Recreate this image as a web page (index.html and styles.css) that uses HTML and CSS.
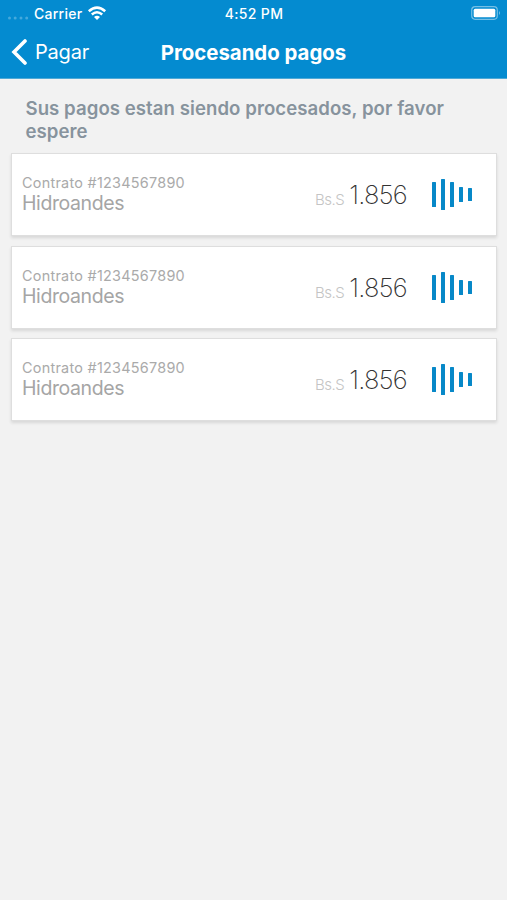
FILE: index.html
```html
<!DOCTYPE html>
<html lang="es">
<head>
<meta charset="utf-8">
<title>Procesando pagos</title>
<link rel="stylesheet" href="styles.css">
</head>
<body>
<header class="header">
  <div class="status">
    <div class="carrier">
      <svg class="signal" width="22" height="4" viewBox="0 0 22 4"><circle cx="2.5" cy="2" r="1.5"/><circle cx="8.2" cy="2" r="1.5"/><circle cx="14" cy="2" r="1.5"/><circle cx="19.7" cy="2" r="1.5"/></svg>
      <span class="carrier-name">Carrier</span>
      <svg class="wifi" width="20" height="15" viewBox="0 0 20 15"><path d="M1.8 5.3Q10-2 18.2 5.3M4.8 8.5Q10 4 15.2 8.5" fill="none" stroke="#fff" stroke-width="2.5"/><path d="M7 10.9Q10 8.5 13 10.9L10 14z" fill="#fff"/></svg>
    </div>
    <span class="time">4:52 PM</span>
    <svg class="battery" width="31" height="14" viewBox="0 0 31 14"><rect x=".7" y=".7" width="25.6" height="12.6" rx="3.5" fill="none" stroke="#75bfe5" stroke-width="1.2"/><rect x="2.7" y="2.7" width="21.6" height="8.6" rx="1.5" fill="#fff"/><path d="M28 5Q30 7 28 9z" fill="#75bfe5"/></svg>
  </div>
  <nav class="nav">
    <a class="back"><svg width="16" height="26" viewBox="0 0 16 26"><path d="M14 2 3 13l11 11" fill="none" stroke="#fff" stroke-width="3.6" stroke-linecap="round"/></svg><span class="back-label">Pagar</span></a>
    <h1 class="title">Procesando pagos</h1>
  </nav>
</header>
<main>
  <p class="message">Sus pagos estan siendo procesados, por favor espere</p>
  <div class="list">
    <article class="card">
      <div class="info"><div class="contract">Contrato #1234567890</div><div class="name">Hidroandes</div></div>
      <div class="amount"><span class="currency">Bs.S</span><span class="value">1.856</span></div>
      <div class="bars"><i class="bar mid"></i><i class="bar tall"></i><i class="bar mid"></i><i class="bar short"></i><i class="bar tiny"></i></div>
    </article>
    <article class="card">
      <div class="info"><div class="contract">Contrato #1234567890</div><div class="name">Hidroandes</div></div>
      <div class="amount"><span class="currency">Bs.S</span><span class="value">1.856</span></div>
      <div class="bars"><i class="bar mid"></i><i class="bar tall"></i><i class="bar mid"></i><i class="bar short"></i><i class="bar tiny"></i></div>
    </article>
    <article class="card">
      <div class="info"><div class="contract">Contrato #1234567890</div><div class="name">Hidroandes</div></div>
      <div class="amount"><span class="currency">Bs.S</span><span class="value">1.856</span></div>
      <div class="bars"><i class="bar mid"></i><i class="bar tall"></i><i class="bar mid"></i><i class="bar short"></i><i class="bar tiny"></i></div>
    </article>
  </div>
</main>
</body>
</html>
```
FILE: styles.css
```css
* { box-sizing: border-box; }
body {
  margin: 0;
  min-height: 900px;
  background: #f2f2f2;
  font-family: Inter, "Liberation Sans", sans-serif;
  white-space: nowrap;
}
svg { display: block; }
.header { height: 79px; background: #048bd0; color: #fff; border-bottom: 1px solid #4fa9d6; }
.status {
  height: 26px;
  display: grid;
  grid-template-columns: 1fr auto 1fr;
  align-items: center;
  padding: 0 5px 0 7px;
}
.carrier { display: flex; align-items: center; }
.signal { fill: #45a9dc; margin-top: 9px; }
.carrier-name { font-size: 14px; font-weight: 500; margin-left: 5px; letter-spacing: .25px; }
.wifi { margin-left: 4.5px; }
.time { font-size: 14px; font-weight: 500; letter-spacing: .35px; margin-left: -1px; }
.battery { justify-self: end; }
.nav {
  height: 52px;
  display: grid;
  grid-template-columns: 1fr auto 1fr;
  align-items: center;
  padding: 0 11px;
}
.back { display: flex; align-items: center; gap: 8px; }
.back-label { font-size: 20px; letter-spacing: -.2px; }
.title { margin: 0; font-size: 20.4px; font-weight: 650; letter-spacing: 0; }
.message {
  margin: 0;
  padding: 18px 40px 0 25.5px;
  height: 74px;
  font-size: 18.6px;
  line-height: 22.5px;
  font-weight: 600;
  letter-spacing: .06px;
  color: #87939d;
  white-space: normal;
}
.list { display: flex; flex-direction: column; gap: 9.5px; padding: 0 10px 0 10.5px; }
.card {
  height: 83px;
  display: flex;
  align-items: center;
  padding: 0 23px 0 10.5px;
  background: #fff;
  border: 1px solid #dedede;
  box-shadow: 0 2px 3px rgba(0, 0, 0, .11);
}
.info { flex: 1; padding-bottom: 2px; }
.contract { font-size: 14.4px; line-height: 19px; color: #aaa; letter-spacing: .27px; }
.name { font-size: 19.5px; line-height: 22px; color: #a5a5a5; font-weight: 400; letter-spacing: -.4px; }
.amount { display: flex; align-items: baseline; gap: 5px; margin-right: 25px; }
.currency { font-size: 15px; font-weight: 300; color: #c4c4c4; letter-spacing: -.5px; padding-top: 1px; position: relative; top: 1px; }
.value { font-size: 25.5px; font-weight: 250; color: #333; letter-spacing: -.7px; }
.bars { display: flex; align-items: center; gap: 5px; width: 41px; }
.bar { width: 4px; background: #0788c8; border-radius: .5px; flex: none; }
.mid { height: 25px; }
.tall { height: 31px; }
.short { height: 15px; }
.tiny { height: 13px; }
```
